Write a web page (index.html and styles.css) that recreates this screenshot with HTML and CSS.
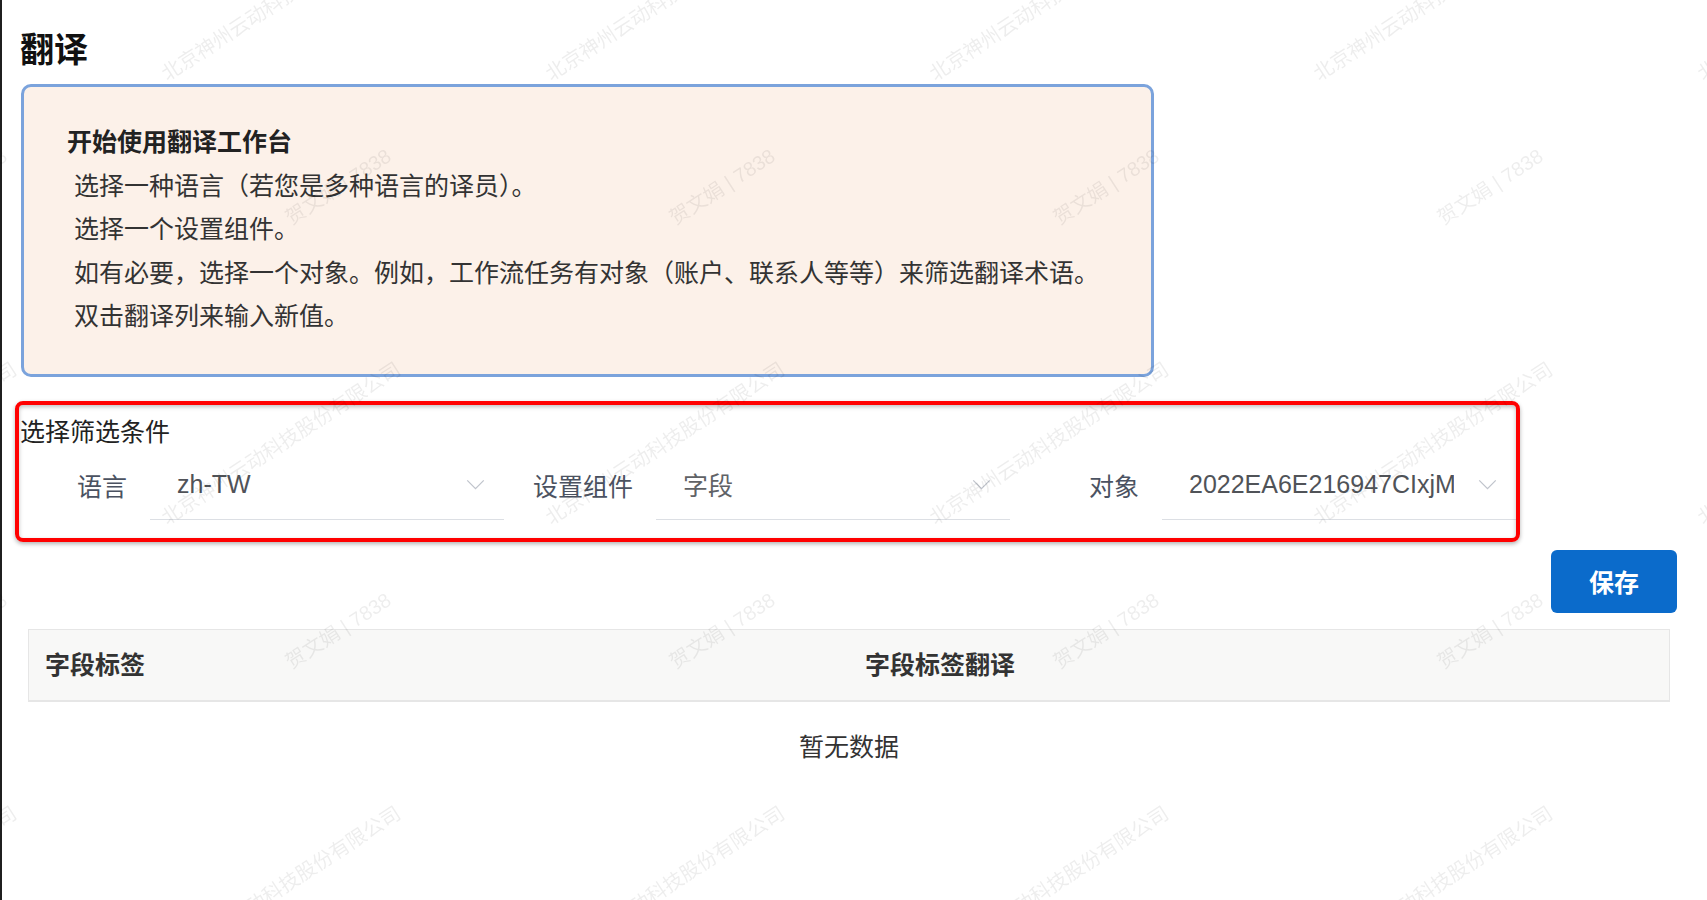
FILE: index.html
```html
<!DOCTYPE html>
<html lang="zh-CN">
  <head>
    <meta charset="UTF-8" />
    <meta name="viewport" content="width=device-width, initial-scale=1.0" />
    <title>翻译</title>
    <link rel="stylesheet" href="styles.css">
  </head>
  <body>
    <div class="page">
      <h1 class="page-title">翻译</h1>

      <div class="intro">
        <p class="intro-title">开始使用翻译工作台</p>
        <p class="intro-line">&nbsp;选择一种语言（若您是多种语言的译员）。</p>
        <p class="intro-line">&nbsp;选择一个设置组件。</p>
        <p class="intro-line">&nbsp;如有必要，选择一个对象。例如，工作流任务有对象（账户、联系人等等）来筛选翻译术语。</p>
        <p class="intro-line">&nbsp;双击翻译列来输入新值。</p>
      </div>

      <section class="filters">
        <div class="filters-title">选择筛选条件</div>
        <div class="filters-row">
          <div class="field">
            <label class="field-label">语言</label>
            <div class="select">
              <span class="select-value">zh-TW</span>
              <svg class="select-arrow" viewBox="0 0 20 12"><path d="M1 1.5 L10 10.5 L19 1.5" /></svg>
            </div>
          </div>
          <div class="field">
            <label class="field-label">设置组件</label>
            <div class="select">
              <span class="select-value select-value_light">字段</span>
              <svg class="select-arrow" viewBox="0 0 20 12"><path d="M1 1.5 L10 10.5 L19 1.5" /></svg>
            </div>
          </div>
          <div class="field">
            <label class="field-label">对象</label>
            <div class="select">
              <span class="select-value">2022EA6E216947CIxjMyQ</span>
              <svg class="select-arrow" viewBox="0 0 20 12"><path d="M1 1.5 L10 10.5 L19 1.5" /></svg>
            </div>
          </div>
        </div>
      </section>

      <div class="actions">
        <button class="btn-save">保存</button>
      </div>

      <div class="table">
        <div class="table-head">
          <div class="table-th">字段标签</div>
          <div class="table-th">字段标签翻译</div>
        </div>
        <div class="table-empty">暂无数据</div>
      </div>
    </div>

    <!-- водяной знак поверх страницы -->
    <div class="watermark">
      <div class="wm-grid">
        <div class="wm-tile"><span class="wm-company">北京神州云动科技股份有限公司</span><span class="wm-name">贺文娟 | 7838</span></div>
        <div class="wm-tile"><span class="wm-company">北京神州云动科技股份有限公司</span><span class="wm-name">贺文娟 | 7838</span></div>
        <div class="wm-tile"><span class="wm-company">北京神州云动科技股份有限公司</span><span class="wm-name">贺文娟 | 7838</span></div>
        <div class="wm-tile"><span class="wm-company">北京神州云动科技股份有限公司</span><span class="wm-name">贺文娟 | 7838</span></div>
        <div class="wm-tile"><span class="wm-company">北京神州云动科技股份有限公司</span><span class="wm-name">贺文娟 | 7838</span></div>
        <div class="wm-tile"><span class="wm-company">北京神州云动科技股份有限公司</span><span class="wm-name">贺文娟 | 7838</span></div>
        <div class="wm-tile"><span class="wm-company">北京神州云动科技股份有限公司</span><span class="wm-name">贺文娟 | 7838</span></div>
        <div class="wm-tile"><span class="wm-company">北京神州云动科技股份有限公司</span><span class="wm-name">贺文娟 | 7838</span></div>
        <div class="wm-tile"><span class="wm-company">北京神州云动科技股份有限公司</span><span class="wm-name">贺文娟 | 7838</span></div>
        <div class="wm-tile"><span class="wm-company">北京神州云动科技股份有限公司</span><span class="wm-name">贺文娟 | 7838</span></div>
        <div class="wm-tile"><span class="wm-company">北京神州云动科技股份有限公司</span><span class="wm-name">贺文娟 | 7838</span></div>
        <div class="wm-tile"><span class="wm-company">北京神州云动科技股份有限公司</span><span class="wm-name">贺文娟 | 7838</span></div>
        <div class="wm-tile"><span class="wm-company">北京神州云动科技股份有限公司</span><span class="wm-name">贺文娟 | 7838</span></div>
        <div class="wm-tile"><span class="wm-company">北京神州云动科技股份有限公司</span><span class="wm-name">贺文娟 | 7838</span></div>
        <div class="wm-tile"><span class="wm-company">北京神州云动科技股份有限公司</span><span class="wm-name">贺文娟 | 7838</span></div>
        <div class="wm-tile"><span class="wm-company">北京神州云动科技股份有限公司</span><span class="wm-name">贺文娟 | 7838</span></div>
        <div class="wm-tile"><span class="wm-company">北京神州云动科技股份有限公司</span><span class="wm-name">贺文娟 | 7838</span></div>
        <div class="wm-tile"><span class="wm-company">北京神州云动科技股份有限公司</span><span class="wm-name">贺文娟 | 7838</span></div>
      </div>
    </div>
  </body>
</html>
```

FILE: styles.css
```css
body {
  margin: 0;
  font-family: "Liberation Sans", "Noto Sans CJK SC", sans-serif;
  color: #333;
  background: #fff;
  overflow: hidden;
}

.page {
  min-height: 100vh;
  box-sizing: border-box;
  border-left: 2px solid #1f1f1f;
  padding: 30px 30px 0 18px;
}

.page-title {
  margin: 0 0 13px;
  font-size: 34px;
  line-height: 41px;
  font-weight: 700;
  color: #111;
}

/* блок с подсказкой */
.intro {
  width: 1133px;
  box-sizing: border-box;
  margin-left: 1px;
  padding: 34px 20px 35px 43px;
  background: #fcf1e9;
  border: 3px solid #7ba3dc;
  border-radius: 10px;
}

.intro p {
  margin: 0;
  font-size: 25px;
  line-height: 43.6px;
}

.intro-title {
  font-weight: 700;
  color: #222;
}

.intro-line {
  color: #333;
  white-space: pre;
}

/* фильтры */
.filters {
  position: relative;
  width: 1496px;
  margin-top: 38px;
}

.filters::before {
  content: "";
  position: absolute;
  top: -14px;
  bottom: -22px;
  left: -5px;
  right: -4px;
  border: 4px solid #ff0000;
  border-radius: 8px;
  box-shadow: 0 2px 4px rgba(0, 0, 0, 0.3), inset 0 2px 4px rgba(0, 0, 0, 0.25);
  pointer-events: none;
}

.filters-title {
  font-size: 25px;
  line-height: 34px;
  color: #222;
}

.filters-row {
  display: grid;
  grid-template-columns: repeat(3, minmax(0, 1fr));
  column-gap: 22px;
  margin-top: 1px;
}

.field {
  display: grid;
  grid-template-columns: 130px minmax(0, 1fr);
  align-items: center;
}

.field-label {
  padding-right: 23px;
  text-align: right;
  font-size: 25px;
  color: #4b5261;
}

.select {
  display: flex;
  align-items: center;
  height: 70px;
  box-sizing: border-box;
  padding-left: 27px;
  border-bottom: 1px solid #dcdfe4;
}

.select-value {
  flex: 1;
  min-width: 0;
  overflow: hidden;
  white-space: nowrap;
  font-size: 25px;
  color: #505358;
}

.select-value_light {
  color: #606266;
}

.select-arrow {
  flex: none;
  width: 19px;
  height: 11px;
  margin: 0 19px 0 24px;
  fill: none;
  stroke: #c0c4cc;
  stroke-width: 1.4;
}

/* кнопка */
.actions {
  display: flex;
  justify-content: flex-end;
  margin-top: 30px;
}

.btn-save {
  width: 126px;
  height: 63px;
  border: none;
  border-radius: 6px;
  background: #0b6bcb;
  color: #fff;
  font-family: inherit;
  font-size: 25px;
  font-weight: 700;
}

/* таблица */
.table {
  margin: 16px 7px 0 8px;
}

.table-head {
  display: grid;
  grid-template-columns: 1fr 1fr;
  height: 73px;
  box-sizing: border-box;
  background: #f8f8f7;
  border: 1px solid #e6e6e6;
  border-bottom-width: 2px;
}

.table-th {
  padding: 0 16px;
  line-height: 70px;
  font-size: 25px;
  font-weight: 700;
  color: #333;
}

.table-empty {
  height: 90px;
  line-height: 90px;
  text-align: center;
  font-size: 25px;
  color: #333;
}

/* водяной знак */
.watermark {
  position: fixed;
  top: 0;
  left: 0;
  right: 0;
  bottom: 0;
  overflow: hidden;
  pointer-events: none;
}

.wm-grid {
  display: grid;
  grid-template-columns: repeat(6, 384px);
  grid-auto-rows: 444px;
  margin-left: -215px;
}

.wm-tile {
  position: relative;
}

.wm-company,
.wm-name {
  position: absolute;
  font-size: 20px;
  line-height: 20px;
  white-space: nowrap;
  color: rgba(0, 0, 0, 0.07);
  transform-origin: 0 100%;
  transform: rotate(-33deg);
}

.wm-company {
  left: 0;
  top: 64px;
}

.wm-name {
  left: 124px;
  top: 208px;
}
```
